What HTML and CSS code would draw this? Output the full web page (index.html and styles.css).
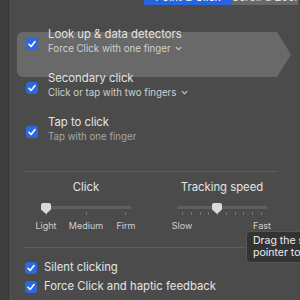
FILE: index.html
```html
<!DOCTYPE html>
<html lang="en">
  <head>
    <meta charset="UTF-8" />
    <title>Trackpad</title>
    <link rel="stylesheet" href="styles.css">
  </head>
  <body>
    <div class="window">
      <div class="sidebar"></div>

      <div class="pane">
        <!-- segmented control, mostly scrolled off the top -->
        <div class="tabs">
          <span class="tab active">Point &amp; Click</span>
          <span class="tab">Scroll &amp; Zoom</span>
        </div>

        <div class="hover-hint"></div>

        <ul class="options">
          <li class="option">
            <span class="check"><svg viewBox="0 0 12 12"><polyline points="3,6.3 5.1,8.5 9,3.6" /></svg></span>
            <div class="option-text">
              <div class="option-title">Look up &amp; data detectors</div>
              <div class="option-sub popup">Force Click with one finger <svg class="chevron" viewBox="0 0 8 5"><polyline points="1,1 4,4 7,1" /></svg></div>
            </div>
          </li>
          <li class="option">
            <span class="check"><svg viewBox="0 0 12 12"><polyline points="3,6.3 5.1,8.5 9,3.6" /></svg></span>
            <div class="option-text">
              <div class="option-title">Secondary click</div>
              <div class="option-sub popup">Click or tap with two fingers <svg class="chevron" viewBox="0 0 8 5"><polyline points="1,1 4,4 7,1" /></svg></div>
            </div>
          </li>
          <li class="option">
            <span class="check"><svg viewBox="0 0 12 12"><polyline points="3,6.3 5.1,8.5 9,3.6" /></svg></span>
            <div class="option-text">
              <div class="option-title">Tap to click</div>
              <div class="option-sub">Tap with one finger</div>
            </div>
          </li>
        </ul>

        <div class="divider"></div>

        <div class="sliders">
          <div class="slider-group">
            <div class="slider-title">Click</div>
            <div class="slider">
              <div class="track"></div>
              <div class="ticks">
                <i></i><i></i><i></i>
              </div>
              <div class="thumb" style="left: 0px"></div>
            </div>
            <div class="slider-labels">
              <span>Light</span><span>Medium</span><span>Firm</span>
            </div>
          </div>

          <div class="slider-group">
            <div class="slider-title">Tracking speed</div>
            <div class="slider">
              <div class="track"></div>
              <div class="ticks">
                <i></i><i></i><i></i><i></i><i></i><i></i><i></i><i></i><i></i><i></i>
              </div>
              <div class="thumb" style="left: 35px"></div>
            </div>
            <div class="slider-labels">
              <span>Slow</span><span>Fast</span>
            </div>
          </div>
        </div>

        <div class="divider lower"></div>

        <ul class="options compact">
          <li class="option">
            <span class="check"><svg viewBox="0 0 12 12"><polyline points="3,6.3 5.1,8.5 9,3.6" /></svg></span>
            <div class="option-title">Silent clicking</div>
          </li>
          <li class="option">
            <span class="check"><svg viewBox="0 0 12 12"><polyline points="3,6.3 5.1,8.5 9,3.6" /></svg></span>
            <div class="option-title">Force Click and haptic feedback</div>
          </li>
        </ul>
        <div class="footnote">Click, then press firmly to enable Force Click and pressure-sensitive features.</div>
      </div>

      <div class="tooltip">Drag the slider to set how fast you want the<br />pointer to move.</div>
    </div>
  </body>
</html>
```

FILE: styles.css
```css
* {
  margin: 0;
  padding: 0;
  box-sizing: border-box;
}

body {
  font-family: "Inter", "Noto Sans", sans-serif;
  background: #4b4b4b;
  color: #e6e6e6;
  width: 300px;
  height: 300px;
  overflow: hidden;
}

.window {
  display: flex;
  height: 300px;
  position: relative;
}

.sidebar {
  flex: none;
  width: 9px;
  background: #3f3f3f;
  border-right: 1px solid #363636;
}

.pane {
  flex: 1;
  position: relative;
  padding-left: 15px;
}

/* Segmented control */
.tabs {
  display: flex;
  margin-top: -13px;
  margin-left: 120px;
  height: 18px;
}

.tab {
  width: 66px;
  padding-top: 3px;
  background: #686868;
  color: #e0e0e0;
  font-size: 11px;
  line-height: 15px;
  text-align: center;
  white-space: nowrap;
  overflow: hidden;
}

.tab.active {
  width: 88px;
  background: #2a64dc;
  color: #fff;
}

/* Highlight arrow behind the first option */
.hover-hint {
  position: absolute;
  left: 8px;
  top: 32px;
  width: 274px;
  height: 45px;
  background: rgba(255, 255, 255, 0.17);
  border-radius: 6px 0 0 6px;
  clip-path: polygon(0 0, 260px 0, 274px 50%, 260px 100%, 0 100%);
}

/* Checkbox rows */
.options {
  list-style: none;
  position: relative;
  margin-top: 22px;
  display: flex;
  flex-direction: column;
  gap: 15px;
}

.option {
  display: flex;
  align-items: flex-start;
  gap: 10px;
}

.check {
  flex: none;
  width: 12px;
  height: 12px;
  margin-left: 2px;
  margin-top: 11px;
  border-radius: 3px;
  background: #2d68de;
  display: flex;
}

.check svg {
  width: 12px;
  height: 12px;
  fill: none;
  stroke: #fff;
  stroke-width: 1.6;
  stroke-linecap: round;
  stroke-linejoin: round;
}

.option-title {
  font-size: 11.3px;
  line-height: 15px;
  color: #e4e4e4;
  white-space: nowrap;
}

.option-sub {
  font-size: 9.7px;
  line-height: 14px;
  color: #a6a6a6;
  white-space: nowrap;
}

.option-sub.popup {
  color: #d0d0d0;
}

.chevron {
  width: 7px;
  height: 5px;
  margin-left: 2px;
  vertical-align: 1px;
  fill: none;
  stroke: #d0d0d0;
  stroke-width: 1.3;
}

.divider {
  width: 254px;
  height: 1px;
  background: #5c5c5c;
  margin-top: 27px;
}

.divider.lower {
  margin-top: 15px;
}

/* Sliders */
.sliders {
  display: grid;
  grid-template-columns: 124px 124px;
  column-gap: 12px;
  margin-top: 8px;
}

.slider-group {
  display: flex;
  flex-direction: column;
  align-items: center;
}

.slider-title {
  font-size: 11.3px;
  line-height: 15px;
  color: #e4e4e4;
  white-space: nowrap;
}

.slider {
  position: relative;
  width: 90px;
  height: 14px;
  margin-top: 8px;
}

.track {
  height: 3px;
  margin-top: 3px;
  border-radius: 2px;
  background: #5f5f5f;
}

.ticks {
  display: flex;
  justify-content: space-between;
  padding: 0 5px;
  margin-top: 3px;
}

.ticks i {
  width: 1px;
  height: 3px;
  background: #767676;
}

.thumb {
  position: absolute;
  top: 0;
  width: 10px;
  height: 11px;
  background: #dadada;
  border-radius: 2px 2px 0 0;
  clip-path: polygon(0 0, 100% 0, 100% 58%, 50% 100%, 0 58%);
}

.slider-labels {
  display: flex;
  justify-content: space-between;
  width: 120px;
  margin-top: 3px;
  font-size: 9px;
  line-height: 12px;
  color: #cfcfcf;
}

.slider-labels span {
  width: 40px;
  text-align: center;
}

/* Bottom checkboxes */
.options.compact {
  margin-top: 12px;
  gap: 4px;
}

.options.compact .option {
  align-items: center;
  gap: 7px;
}

.options.compact .check {
  margin: 0 0 0 1px;
}

.footnote {
  margin-top: 6px;
  margin-left: 20px;
  font-size: 9.7px;
  line-height: 14px;
  color: #a6a6a6;
  white-space: nowrap;
}

/* Tooltip over the tracking slider */
.tooltip {
  position: absolute;
  left: 246px;
  top: 231px;
  padding: 3px 6px;
  background: #333;
  border: 1px solid #555;
  border-radius: 4px;
  font-size: 10.5px;
  line-height: 12px;
  color: #eee;
  white-space: nowrap;
}
```
